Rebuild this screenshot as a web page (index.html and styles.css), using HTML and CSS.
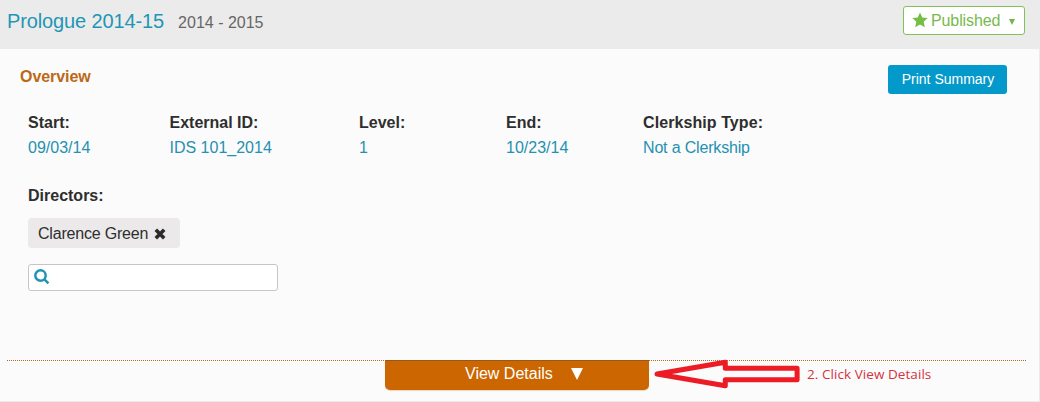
FILE: index.html
```html
<!DOCTYPE html>
<html lang="en">
<head>
<meta charset="utf-8">
<title>Prologue 2014-15</title>
<link rel="stylesheet" href="styles.css">
</head>
<body>
<div class="page">
  <header class="header">
    <div class="heading">
      <h1 class="title">Prologue 2014-15</h1>
      <span class="years">2014 - 2015</span>
    </div>
    <button class="status">
      <svg class="star" viewBox="0 0 14 14"><path d="M7 .5l2 4.3 4.7.5-3.5 3.3 1 4.8L7 11l-4.2 2.4 1-4.8L.3 5.3 5 4.8z"/></svg>
      <span class="status-label">Published</span>
      <svg class="caret" viewBox="0 0 6 6"><path d="M0 0h6L3 6z"/></svg>
    </button>
  </header>
  <main class="panel">
    <div class="panel-head">
      <h2 class="section-title">Overview</h2>
      <button class="print">Print Summary</button>
    </div>
    <dl class="facts">
      <div><dt>Start:</dt><dd>09/03/14</dd></div>
      <div><dt>External ID:</dt><dd>IDS 101_2014</dd></div>
      <div><dt>Level:</dt><dd>1</dd></div>
      <div><dt>End:</dt><dd>10/23/14</dd></div>
      <div class="clerkship"><dt>Clerkship Type:</dt><dd>Not a Clerkship</dd></div>
    </dl>
    <section class="directors">
      <h3 class="label">Directors:</h3>
      <div class="chip"><span class="chip-name">Clarence Green</span>
        <svg class="remove" viewBox="0 0 12 12"><path d="M1.8 1.8l8.4 8.4M10.2 1.8l-8.4 8.4"/></svg>
      </div>
      <div class="search">
        <svg class="lens" viewBox="0 0 16 16"><circle cx="6.5" cy="6.5" r="5.2"/><path d="M10.4 10.4l4 4"/></svg>
      </div>
    </section>
    <footer class="footer">
      <button class="details"><span class="details-label">View Details</span>
        <svg class="down" viewBox="0 0 12 12"><path d="M0 0h12L6 12z"/></svg>
      </button>
      <div class="note">
        <svg class="arrow" viewBox="0 0 148 30"><path d="M4 15L72.3 3.2v6h71.8v11.6H72.3v6z"/></svg>
        <span class="note-text">2. Click View Details</span>
      </div>
    </footer>
  </main>
</div>
</body>
</html>
```
FILE: styles.css
```css
* { box-sizing: border-box; }
body { margin: 0; background: #fff; font: 16px/20px "Liberation Sans", Arial, sans-serif; color: #2e2e2e; }
h1, h2, h3, dl, dd { margin: 0; }
button { font: inherit; margin: 0; padding: 0; }
svg { display: block; flex: none; }
.page { width: 1040px; height: 402px; display: flex; flex-direction: column; }
.header { height: 49px; background: #ecebeb; display: flex; justify-content: space-between; align-items: flex-start; padding: 6px 15px 0 7px; }
.heading { display: flex; align-items: baseline; gap: 14px; padding-top: 3px; }
.title { font-size: 20px; line-height: 24px; font-weight: 400; color: #1f96b6; letter-spacing: -.12px; }
.years { color: #666; }
.status { width: 122px; height: 29px; background: #fff; border: 1px solid #82c058; border-radius: 3px; display: flex; align-items: center; color: #78b94b; padding-left: 8px; }
.star { width: 16px; height: 16px; margin-top: -1px; fill: #75bd45; }
.status-label { margin-left: 3px; letter-spacing: -.1px; }
.caret { width: 6px; height: 6px; margin-left: 9px; margin-top: 2px; fill: #75b34d; }
.panel { height: 353px; background: #fbfbfb; border-right: 1px solid #ebebeb; border-bottom: 1px solid #ebebeb; display: flex; flex-direction: column; }
.panel-head { display: flex; justify-content: space-between; padding: 16px 32px 0 20px; height: 63px; }
.section-title { font-size: 16px; line-height: 24px; color: #bc6818; letter-spacing: -.05px; }
.print { width: 119px; height: 29px; border: 0; border-radius: 3px; background: #0399ca; color: #fff; font-size: 14px; line-height: 29px; padding-left: 1px; }
.facts { display: grid; grid-template-columns: 141.5px 189.5px 147px 137px 200px; padding-left: 28px; line-height: 25px; height: 71px; margin-top: -2px; }
.facts dt, .label { font-weight: 700; }
.facts dd { color: #2491b0; }
.clerkship dt { letter-spacing: .08px; }
.clerkship dd { letter-spacing: -.17px; }
.directors { padding: 2px 0 0 28px; height: 177px; }
.label { font-size: 16px; line-height: 25px; }
.chip { width: 152px; height: 30px; margin-top: 10px; background: #ebe9e9; border-radius: 4px; display: flex; align-items: center; padding: 2px 0 0 10px; }
.chip-name { letter-spacing: -.2px; }
.remove { width: 12px; height: 12px; margin-left: 6px; stroke: #2b2b2b; stroke-width: 3.6; }
.search { width: 250px; height: 27px; margin-top: 16px; border: 1px solid #c6c6c6; border-radius: 3px; background: #fff; padding: 4px 5px; }
.lens { width: 16px; height: 16px; fill: none; stroke: #2093b3; stroke-width: 2.5; }
.footer { position: relative; margin: 2px 13px 0 7px; height: 41px; display: flex; padding-left: 378px; }
.footer::before { content: ""; position: absolute; left: 0; right: 0; top: 0; height: 0; border-top: 1px dotted #b06a1c; }
.details { position: relative; width: 264px; height: 30px; background: #cb6600; border: 0; border-top: 1px solid #96591b; border-radius: 0 0 5px 5px; box-shadow: 0 1px 1px #e6d5c3; color: #fff; display: flex; align-items: center; padding: 0 0 3px 80px; }
.down { width: 12px; height: 12px; margin-left: 18px; fill: #fff; }
.note { position: relative; display: flex; align-items: center; height: 28px; margin-left: 4px; }
.arrow { width: 148px; height: 30px; fill: none; stroke: #ed1c24; stroke-width: 5; stroke-linejoin: round; }
.note-text { margin-left: 6px; font: 13.5px/18px "Open Sans", "Noto Sans", sans-serif; letter-spacing: .06px; color: #d5333b; white-space: nowrap; }
```
